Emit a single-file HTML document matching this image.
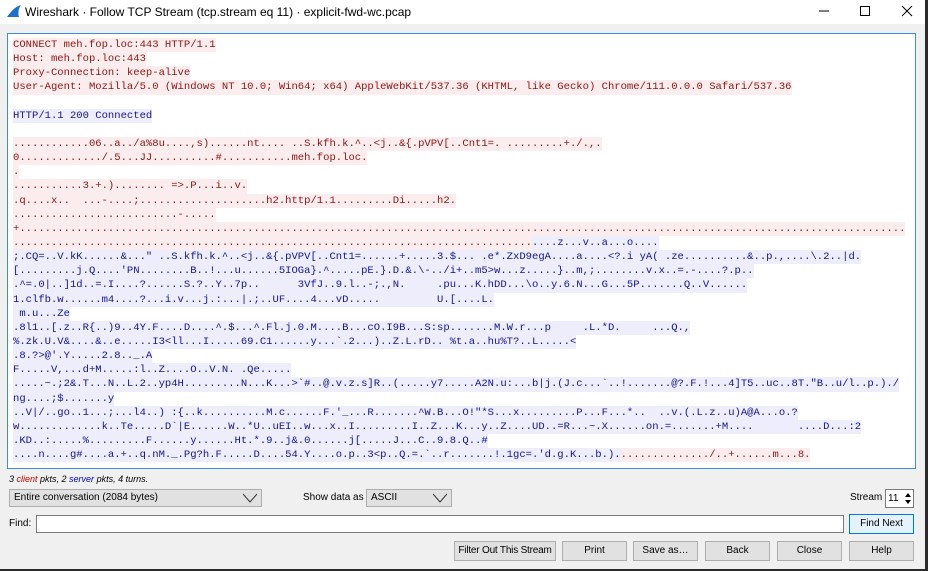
<!DOCTYPE html>
<html><head><meta charset="utf-8">
<style>
*{box-sizing:border-box;margin:0;padding:0}
body{width:928px;height:571px;overflow:hidden;background:#2b2b2b;font-family:"Liberation Sans",sans-serif;position:relative}
#win{position:absolute;left:0;top:0;width:925px;height:569px;background:#f0f0f0}
#title{position:absolute;left:0;top:0;width:925px;height:24px;background:#fff;font-size:12px;color:#000}
#title .t{position:absolute;left:25px;top:5px}
#text{position:absolute;left:7px;top:33px;width:909px;height:436px;background:#fff;border:1px solid #3c8de0;overflow:hidden}
pre{position:absolute;left:5px;top:4px;font-family:"Liberation Mono",monospace;font-size:10.55px;line-height:14.14px;white-space:pre}
.c,.s{display:inline-block;height:14.14px;vertical-align:top}
.c{background:#fbeded;color:#8b1515}
.s{background:#ededfb;color:#15158b}
.ui{position:absolute;font-size:10px;color:#000;white-space:nowrap}
.btn{position:absolute;height:20px;background:#e1e1e1;border:1px solid #adadad;font-size:10px;text-align:center;line-height:18px;white-space:nowrap}
.combo{position:absolute;height:18px;background:#e1e1e1;border:1px solid #adadad;font-size:10px;line-height:16px;padding-left:4px;white-space:nowrap}
.combo svg{position:absolute;right:4px;top:3px}
</style></head><body>
<div id="win">
<div id="title">
<svg style="position:absolute;left:6px;top:4px" width="16" height="14" viewBox="0 0 16 14"><path d="M1 13 C4 9 8 3 15 1 C12 5 12 10 13 13 Z" fill="#1e6fc9"/></svg>
<span class="t">Wireshark · Follow TCP Stream (tcp.stream eq 11) · explicit-fwd-wc.pcap</span>
<svg style="position:absolute;left:819px;top:4px" width="100" height="14" viewBox="0 0 100 14">
<line x1="0" y1="7" x2="10" y2="7" stroke="#000" stroke-width="1"/>
<rect x="41.5" y="2.5" width="9" height="9" fill="none" stroke="#000"/>
<path d="M83 2 L93 12 M93 2 L83 12" stroke="#000" stroke-width="1"/>
</svg>
</div>
<div id="text"><pre><span class="c">CONNECT meh.fop.loc:443 HTTP/1.1</span>
<span class="c">Host: meh.fop.loc:443</span>
<span class="c">Proxy-Connection: keep-alive</span>
<span class="c">User-Agent: Mozilla/5.0 (Windows NT 10.0; Win64; x64) AppleWebKit/537.36 (KHTML, like Gecko) Chrome/111.0.0.0 Safari/537.36</span>

<span class="s">HTTP/1.1 200 Connected</span>

<span class="c">............06..a../a%8u....,s)......nt.... ..S.kfh.k.^..&lt;j..&amp;{.pVPV[..Cnt1=. .........+./.,.</span>
<span class="c">0............./.5...JJ..........#...........meh.fop.loc.</span>
<span class="c">.</span>
<span class="c">...........3.+.)........ =&gt;.P...i..v.</span>
<span class="c">.q....x..  ...-....;....................h2.http/1.1.........Di.....h2.</span>
<span class="c">..........................-.....</span>
<span class="c">+............................................................................................................................................</span>
<span class="c">..................................................................................</span><span class="s">....z...v..a...o....</span>
<span class="s">;.CQ=..V.kK......&amp;..." ..S.kfh.k.^..&lt;j..&amp;{.pVPV[..Cnt1=......+.....3.$... .e*.ZxD9egA....a....&lt;?.i yA( .ze..........&amp;..p.,....\.2..|d.</span>
<span class="s">[.........j.Q....'PN........B..!...u......5IOGa}.^.....pE.}.D.&amp;.\-../i+..m5&gt;w...z.....}..m,;........v.x..=.-....?.p..</span>
<span class="s">.^=.0|..]1d..=.I....?......S.?..Y..7p..      3VfJ..9.l..-;.,N.     .pu...K.hDD...\o..y.6.N...G...5P.......Q..V......</span>
<span class="s">1.clfb.w......m4....?...i.v...j.:...|.;..UF....4...vD.....         U.[....L.</span>
<span class="s"> m.u...Ze</span>
<span class="s">.8l1..[.z..R{..)9..4Y.F....D....^.$...^.Fl.j.0.M....B...cO.I9B...S:sp.......M.W.r...p     .L.*D.     ...Q.,</span>
<span class="s">%.zk.U.V&amp;....&amp;..e.....I3&lt;ll...I.....69.C1......y...`.2...)..Z.L.rD.. %t.a..hu%T?..L.....&lt;</span>
<span class="s">.8.?&gt;@'.Y.....2.8.._.A</span>
<span class="s">F.....V,...d+M.....:l..Z....O..V.N. .Qe.....</span>
<span class="s">.....~.;2&amp;.T...N..L.2..yp4H.........N...K...&gt;`#..@.v.z.s]R..(.....y7.....A2N.u:...b|j.(J.c...`..!.......@?.F.!...4]T5..uc..8T."B..u/l..p.)./</span>
<span class="s">ng....;$.......y</span>
<span class="s">..V|/..go..1...;...l4..) :{..k..........M.c......F.'_...R.......^W.B...O!"*S...x.........P...F...*..  ..v.(.L.z..u)A@A...o.?</span>
<span class="s">w.............k..Te.....D`|E......W..*U..uEI..w...x..I.........I..Z...K...y..Z....UD..=R...~.X......on.=.......+M....       ....D...:2</span>
<span class="s">.KD..:.....%.........F......y......Ht.*.9..j&amp;.0......j[.....J...C..9.8.Q..#</span>
<span class="s">....n....g#....a.+..q.nM._.Pg?h.F.....D....54.Y....o.p..3&lt;p..Q.=.`..r.......!.1gc=.'d.g.K...b.).</span><span class="c">............../..+......m...8.</span></pre></div>

<div class="ui" style="left:9px;top:474px;font-size:9px;font-style:italic">3 <span style="color:#c00000">client</span> pkts, 2 <span style="color:#0000c0">server</span> pkts, 4 turns.</div>

<div class="combo" style="left:9px;top:489px;width:253px">Entire conversation (2084 bytes)<svg width="14" height="10"><path d="M0 1 L7 9 L14 1" fill="none" stroke="#333"/></svg></div>
<div class="ui" style="left:303px;top:492px">Show data as</div>
<div class="combo" style="left:366px;top:489px;width:86px">ASCII<svg width="14" height="10"><path d="M0 1 L7 9 L14 1" fill="none" stroke="#333"/></svg></div>
<div class="ui" style="left:850px;top:492px">Stream</div>
<div style="position:absolute;left:885px;top:489px;width:29px;height:19px;background:#fff;border:1px solid #7a7a7a;font-size:10px;line-height:17px;padding-left:2px">11
<svg style="position:absolute;right:1px;top:1px" width="8" height="15"><path d="M1 6 L4 2 L7 6 Z M1 9 L4 13 L7 9 Z" fill="#000"/></svg></div>

<div class="ui" style="left:9px;top:518px">Find:</div>
<div style="position:absolute;left:36px;top:515px;width:808px;height:18px;background:#fff;border:1px solid #7a7a7a"></div>
<div class="btn" style="left:849px;top:514px;width:65px;border:1px solid #0078d7;background:#e5f1fb">Find Next</div>

<div class="btn" style="left:454px;top:541px;width:102px;letter-spacing:-0.2px">Filter Out This Stream</div>
<div class="btn" style="left:562px;top:541px;width:65px">Print</div>
<div class="btn" style="left:633px;top:541px;width:65px">Save as…</div>
<div class="btn" style="left:705px;top:541px;width:65px">Back</div>
<div class="btn" style="left:777px;top:541px;width:65px">Close</div>
<div class="btn" style="left:849px;top:541px;width:65px">Help</div>
</div>
</body></html>
